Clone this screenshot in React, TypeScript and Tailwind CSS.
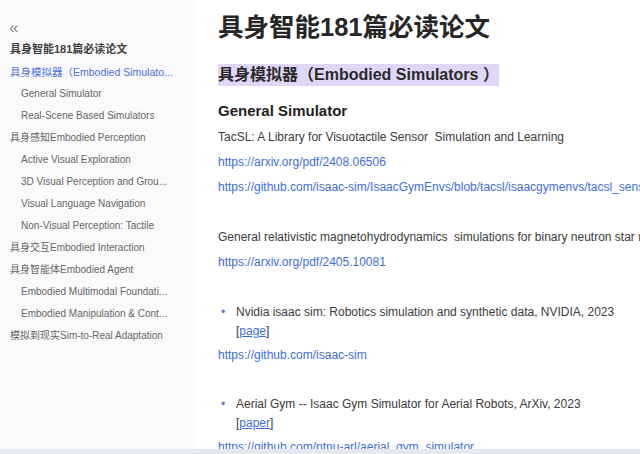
import React from "react";

const cjk = "font-['Liberation_Sans','Noto_Sans_CJK_SC',sans-serif]";

type NavItem = { label: string; level: 1 | 2; active?: boolean };

const nav: NavItem[] = [
  { label: "具身模拟器（Embodied Simulato...", level: 1, active: true },
  { label: "General Simulator", level: 2 },
  { label: "Real-Scene Based Simulators", level: 2 },
  { label: "具身感知Embodied Perception", level: 1 },
  { label: "Active Visual Exploration", level: 2 },
  { label: "3D Visual Perception and Grou...", level: 2 },
  { label: "Visual Language Navigation", level: 2 },
  { label: "Non-Visual Perception: Tactile", level: 2 },
  { label: "具身交互Embodied Interaction", level: 1 },
  { label: "具身智能体Embodied Agent", level: 1 },
  { label: "Embodied Multimodal Foundati...", level: 2 },
  { label: "Embodied Manipulation & Cont...", level: 2 },
  { label: "模拟到现实Sim-to-Real Adaptation", level: 1 },
];

const Link = ({ children }: { children: React.ReactNode }) => (
  <p className="h-[25px] leading-[25px] text-[#3d6fd8]">{children}</p>
);

const Text = ({ children }: { children: React.ReactNode }) => (
  <p className="h-[25px] leading-[25px] text-[#3b3b3b]">{children}</p>
);

const Bullet = ({ title, tag }: { title: string; tag: string }) => (
  <div className="flex text-[#3b3b3b] leading-[19px]">
    <span className="w-[18px] pl-[3px] text-[#5a7fd0]">•</span>
    <div>
      <p>{title}</p>
      <p>
        [<span className="text-[#3d6fd8] underline">{tag}</span>]
      </p>
    </div>
  </div>
);

const Sidebar = () => {
  return (
    <aside className={`w-[196px] shrink-0 bg-[#fafafa] ${cjk} text-[10px]`}>
      <div className="pl-[9px] pt-[19px] h-[38px] text-[17px] leading-[18px] text-[#8a8a8a]">«</div>
      <p className="pl-[10px] h-[23px] leading-[22px] font-bold text-[#3f3f3f] text-[11px]">
        具身智能181篇必读论文
      </p>
      {nav.map((item) => (
        <p
          key={item.label}
          className={`h-[22px] leading-[22px] whitespace-nowrap ${
            item.level === 1 ? "pl-[10px]" : "pl-[21px]"
          } ${item.active ? "text-[#4a6fd9] text-[10.5px]" : "text-[#666666]"}`}
        >
          {item.label}
        </p>
      ))}
    </aside>
  );
};

const App = () => {
  return (
    <div className="relative flex h-[454px] w-[640px] overflow-hidden bg-white">
      <Sidebar />
      <main className={`flex-1 overflow-hidden whitespace-nowrap pl-[22px] ${cjk} text-[12px]`}>
        <h1 className="mt-[11px] h-[32px] leading-[32px] text-[25.5px] font-bold text-[#262626]">
          具身智能181篇必读论文
        </h1>
        <div className="mt-[21px]">
          <span className="inline-block h-[22px] leading-[22px] bg-[#e2d6f8] text-[16px] font-bold text-[#2a2a2a]">
            具身模拟器（Embodied Simulators ）
          </span>
        </div>
        <h3 className="mt-[14px] h-[22px] leading-[22px] text-[15px] font-bold text-[#222222]">
          General Simulator
        </h3>
        <div className="mt-[3px]">
          <Text>TacSL: A Library for Visuotactile Sensor&nbsp; Simulation and Learning</Text>
          <Link>https://arxiv.org/pdf/2408.06506</Link>
          <Link>https://github.com/isaac-sim/IsaacGymEnvs/blob/tacsl/isaacgymenvs/tacsl_sensors</Link>
          <div className="h-[25px]" />
          <Text>
            General relativistic magnetohydrodynamics&nbsp; simulations for binary neutron star mergers
          </Text>
          <Link>https://arxiv.org/pdf/2405.10081</Link>
          <div className="h-[25px]" />
        </div>
        <div className="mt-[3px]">
          <Bullet title="Nvidia isaac sim: Robotics simulation and synthetic data, NVIDIA, 2023" tag="page" />
        </div>
        <div className="mt-[2px]">
          <Link>https://github.com/isaac-sim</Link>
          <div className="h-[25px]" />
        </div>
        <div className="mt-[2px]">
          <Bullet title="Aerial Gym -- Isaac Gym Simulator for Aerial Robots, ArXiv, 2023" tag="paper" />
        </div>
        <div className="mt-[2px]">
          <Link>https://github.com/ntnu-arl/aerial_gym_simulator</Link>
        </div>
      </main>
      <div className="absolute bottom-0 left-0 h-[5px] w-full bg-[#e5e8f0]" />
    </div>
  );
};

export default App;
